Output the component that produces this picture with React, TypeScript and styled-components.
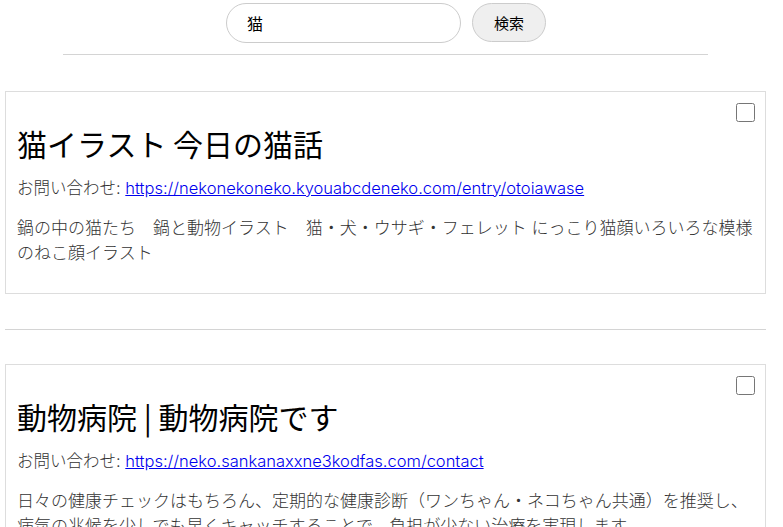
import * as React from 'react';
import styled, { createGlobalStyle } from 'styled-components';

const GlobalStyle = createGlobalStyle`
  html, body {
    margin: 0;
    padding: 0;
    background: #fff;
  }
  body {
    font-family: Inter, "Noto Sans CJK JP", sans-serif;
    color: #333;
  }
`;

interface Result {
  title: string;
  contact: string;
  description: string;
}

const results: Result[] = [
  {
    title: '猫イラスト 今日の猫話',
    contact: 'https://nekonekoneko.kyouabcdeneko.com/entry/otoiawase',
    description:
      '鍋の中の猫たち　鍋と動物イラスト　猫・犬・ウサギ・フェレット にっこり猫顔いろいろな模様のねこ顔イラスト',
  },
  {
    title: '動物病院 | 動物病院です',
    contact: 'https://neko.sankanaxxne3kodfas.com/contact',
    description:
      '日々の健康チェックはもちろん、定期的な健康診断（ワンちゃん・ネコちゃん共通）を推奨し、病気の兆候を少しでも早くキャッチすることで、負担が少ない治療を実現します。',
  },
];

const Page = styled.div`
  padding: 3px 17px 0 5px;
`;

const SearchBar = styled.form`
  display: flex;
  justify-content: center;
  gap: 11px;
  padding-left: 1px;
`;

const SearchInput = styled.input`
  box-sizing: border-box;
  width: 235px;
  height: 40px;
  padding: 0 20px;
  border: 1px solid #ccc;
  border-radius: 20px;
  font-family: "Noto Sans CJK JP", sans-serif;
  font-size: 16px;
  color: #000;
  outline: none;
`;

const SearchButton = styled.button`
  box-sizing: border-box;
  width: 74px;
  height: 39px;
  border: 1px solid #ccc;
  border-radius: 20px;
  background: #efefef;
  font-family: "Noto Sans CJK JP", sans-serif;
  font-size: 15px;
  color: #000;
`;

const Rule = styled.hr<{ $wide?: boolean }>`
  border: none;
  border-top: 1px solid #d4d4d4;
  width: ${(p) => (p.$wide ? '100%' : '645px')};
  margin: ${(p) => (p.$wide ? '35px 0 34px' : '11px auto 36px')};
`;

const Card = styled.article`
  border: 1px solid #ddd;
  padding: 11px 10px 27px 11px;
`;

const CardTop = styled.div`
  display: flex;
  justify-content: flex-end;
  height: 20px;
`;

const Check = styled.input`
  width: 19px;
  height: 19px;
  margin: 0;
  accent-color: #666;
`;

const Title = styled.h2`
  margin: 2px 0 0;
  font-family: "Noto Sans CJK JP", sans-serif;
  font-weight: 400;
  font-size: 30px;
  line-height: 36px;
  color: #000;
`;

const Contact = styled.p`
  margin: 15px 0 0;
  font-size: 16.5px;
  line-height: 24px;
  font-weight: 300;
  color: #333;
`;

const Link = styled.a`
  color: #0000ee;
  text-decoration: underline;
`;

const Description = styled.p`
  margin: 16px 0 0;
  font-size: 17px;
  line-height: 25px;
  font-weight: 300;
  color: #333;
`;

const ResultCard: React.FC<{ result: Result }> = ({ result }) => (
  <Card>
    <CardTop>
      <Check type="checkbox" />
    </CardTop>
    <Title>{result.title}</Title>
    <Contact>
      お問い合わせ: <Link href="#">{result.contact}</Link>
    </Contact>
    <Description>{result.description}</Description>
  </Card>
);

export default function App() {
  return (
    <>
      <GlobalStyle />
      <Page>
        <SearchBar onSubmit={(e) => e.preventDefault()}>
          <SearchInput defaultValue="猫" />
          <SearchButton type="submit">検索</SearchButton>
        </SearchBar>
        <Rule />
        {results.map((r, i) => (
          <React.Fragment key={r.contact}>
            {i > 0 && <Rule $wide />}
            <ResultCard result={r} />
          </React.Fragment>
        ))}
      </Page>
    </>
  );
}
